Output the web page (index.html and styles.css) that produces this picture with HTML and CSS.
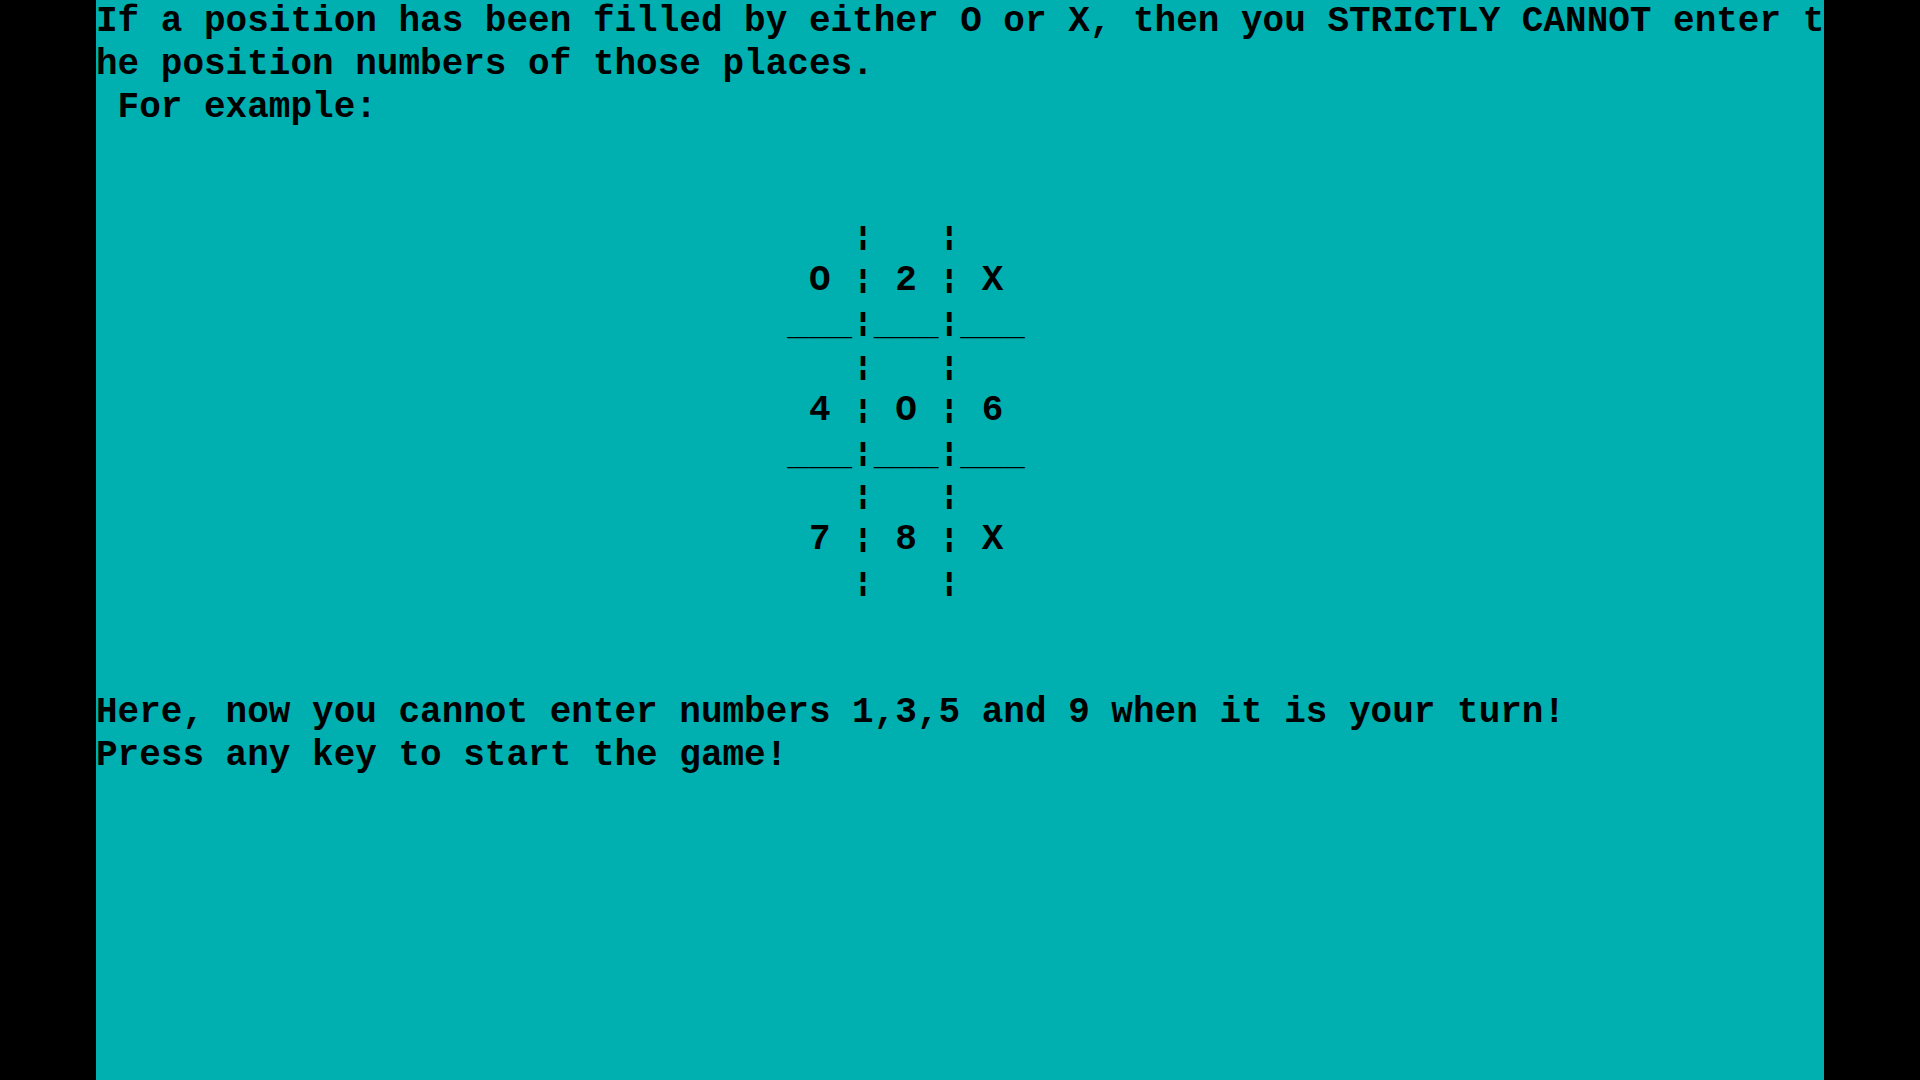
FILE: index.html
```html
<!DOCTYPE html>
<html>
<head>
<meta charset="utf-8">
<link rel="stylesheet" href="styles.css">
</head>
<body>
<div class="screen"><pre class="console">If a position has been filled by either O or X, then you STRICTLY CANNOT enter t
he position numbers of those places.
 For example:


                                   <span class="bar">¦</span>   <span class="bar">¦</span>
                                 O <span class="bar">¦</span> 2 <span class="bar">¦</span> X
                                <span class="us">___</span><span class="bar">¦</span><span class="us">___</span><span class="bar">¦</span><span class="us">___</span>
                                   <span class="bar">¦</span>   <span class="bar">¦</span>
                                 4 <span class="bar">¦</span> O <span class="bar">¦</span> 6
                                <span class="us">___</span><span class="bar">¦</span><span class="us">___</span><span class="bar">¦</span><span class="us">___</span>
                                   <span class="bar">¦</span>   <span class="bar">¦</span>
                                 7 <span class="bar">¦</span> 8 <span class="bar">¦</span> X
                                   <span class="bar">¦</span>   <span class="bar">¦</span>


Here, now you cannot enter numbers 1,3,5 and 9 when it is your turn!
Press any key to start the game!</pre></div>
</body>
</html>
```

FILE: styles.css
```css
html, body {
  margin: 0;
  padding: 0;
  background: #000;
  height: 100%;
}
body {
  display: flex;
  justify-content: center;
}
.screen {
  width: 1728px;
  height: 1080px;
  background: #00afaf;
  overflow: hidden;
}
.console {
  margin: 0;
  font-family: "Liberation Mono", "Courier New", monospace;
  font-weight: bold;
  font-size: 36px;
  line-height: 43.2px;
  color: #000;
  white-space: pre;
}
.bar {
  display: inline-block;
  width: 21.6px;
  text-align: center;
  transform: translateY(1px) scaleY(0.72);
}
.us {
  display: inline-block;
  transform: translateY(5px) scaleY(0.7);
}
```
